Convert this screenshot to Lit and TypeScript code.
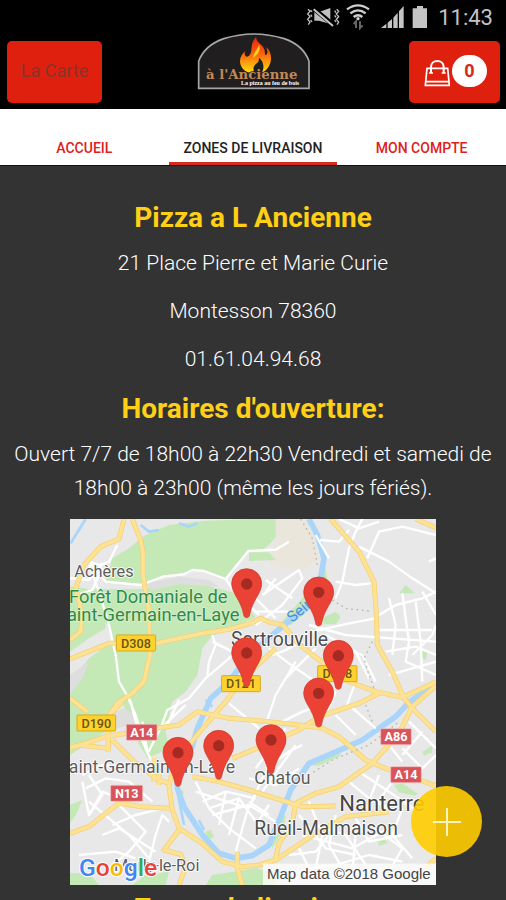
import { LitElement, html, css, svg } from "lit";
import { customElement, state } from "lit/decorators.js";

type Label = { x: number; y: number; text: string; size: string };
type Shield = { x: number; y: number; w: number; text: string; kind: string };

const PINS = [
  [533, 207], [749, 232], [533, 414], [808, 422],
  [749, 535], [606, 675], [449, 692], [327, 713],
];

const SHIELDS: Shield[] = [
  { x: 142, y: 360, w: 118, text: "D308", kind: "d" },
  { x: 458, y: 482, w: 116, text: "D121", kind: "d" },
  { x: 746, y: 452, w: 118, text: "D308", kind: "d" },
  { x: 24, y: 600, w: 116, text: "D190", kind: "d" },
  { x: 172, y: 628, w: 92, text: "A14", kind: "a" },
  { x: 125, y: 811, w: 96, text: "N13", kind: "a" },
  { x: 935, y: 641, w: 92, text: "A86", kind: "a" },
  { x: 965, y: 755, w: 92, text: "A14", kind: "a" },
];

const TOWNS: Label[] = [
  { x: 16, y: 186, text: "Achères", size: "s" },
  { x: 486, y: 392, text: "Sartrouville", size: "l" },
  { x: -32, y: 775, text: "Saint-Germain-en-Laye", size: "m" },
  { x: 556, y: 808, text: "Chatou", size: "m" },
  { x: 811, y: 887, text: "Nanterre", size: "xl" },
  { x: 556, y: 960, text: "Rueil-Malmaison", size: "l" },
  { x: 135, y: 1068, text: "Marly-le-Roi", size: "s" },
];

const PARKS = [
  "M225 62L300 30L400 18L540 12L620 12V66L600 90L580 104L538 108L508 140L470 192L405 166L350 172L290 184L230 212L110 200L130 130L180 100Z",
  "M60 222L225 222L330 196L440 218L500 235L560 306L480 345L430 362L400 400L385 480L350 530L310 560L290 650L300 700L236 730L205 680L160 560L110 650L3 720V500L60 430L130 380L120 330L60 300Z",
  "M3 215L50 220L100 250L110 340L60 370L3 410Z",
  "M540 40L585 15L620 66L580 105H540Z",
  "M540 112L600 112L620 135L540 138Z",
  "M630 330L700 250L745 190L765 140L775 190L740 270L665 330Z",
  "M760 310L800 290L815 305L800 328H765Z",
  "M990 235L1010 210L1038 235Z",
  "M1056 405L1075 410L1070 435L1058 430Z",
  "M725 750L760 725L810 710L815 722L750 752Z",
  "M975 810L1000 805L1045 835L1040 842L990 832Z",
  "M1060 710L1090 692V712L1065 722Z",
  "M925 970L945 968L955 985L930 992Z",
  "M410 950L425 945L435 965L415 978Z",
  "M3 870L40 855L20 900L3 925Z",
  "M190 1110L230 1080L300 1070L290 1110Z",
  "M3 1075H60L90 1110H3Z",
  "M410 1110L430 1080L560 1060L620 1075V1110Z",
  "M330 820L345 830L340 845L330 840Z",
  "M620 915L650 900L645 940L610 1000L600 970Z",
];

const HIGHWAYS = [
  "M190 12L213 70L222 110V180L240 290L243 420L225 500L190 535L145 565L118 605V710",
  "M165 12L150 72L95 95L45 150L20 220L40 300L35 350L3 375",
  "M3 432L120 385L260 385L400 355L480 343L545 325L575 310L602 322L642 330L690 388L770 450L840 500L920 530L1000 547L1060 520L1101 500",
  "M785 12L870 110L915 200L922 300L925 390L970 470L1005 550L1040 590L1101 650",
  "M3 700L110 665L260 640L330 630L385 590L480 610L570 617L690 630L760 640L810 665L890 735L950 760L1101 812",
  "M620 400L560 455L500 520L470 560L380 665L312 755L300 815L310 885L330 940L400 985L460 1040L520 1055L570 1050L620 1035L740 955L830 905L960 890",
  "M620 1030L630 985L670 925L680 865L740 835L810 815L910 745L990 655L1030 575L1101 512",
  "M370 785L450 800L540 825L620 850L700 875L800 873",
  "M3 955L60 935L110 895L150 865L220 875L300 880",
  "M130 675L200 745L270 795L300 805",
  "M330 945L285 1005L335 1018L350 1055L330 1110",
  "M490 730L540 710L690 645L750 605L870 565L940 530",
  "M505 1010L505 1060L520 1110",
  "M3 550L55 590M118 660V700L30 690L3 698",
  "M120 600L160 560M1040 12L1101 38M1070 1060L1101 1030",
  "M255 730V800M270 740V810",
];

const STREETS = [
  "M145 90L120 140L90 150L60 140M60 140L110 200L215 210L285 184L345 178L370 165L405 168L470 192L500 235L570 300",
  "M470 192L538 108L620 104L660 80M60 150L90 230L120 330L140 420L150 500L185 560L205 640L236 715L275 640L295 585L360 550L410 490L480 430L540 370",
  "M430 360L440 390L420 440L415 480M430 380L490 410M3 190L60 195L100 150M20 240L70 225L100 160",
  "M580 240L690 165L700 190L640 270L560 330M590 195L670 250M620 190L590 230M660 290L560 290M560 250L620 310",
  "M880 12L860 50L840 100L820 200L800 250M752 75L810 80L840 45M870 95L960 140L1030 190L1101 235M895 130L930 50L1000 35L1101 60",
  "M800 200L860 210L905 205M930 300L980 270L1060 250L1101 230M720 330L830 360L1101 380M730 350L840 325L920 310",
  "M1000 235L1010 310L1020 380L1010 440L1101 480M960 250L980 330L970 420M1040 260L1055 380L1060 500M930 345H1090M950 410L1040 395L1101 420",
  "M600 400L680 460L770 520M680 440L620 540L590 630M610 420L640 410L700 380M740 400L650 490M820 400L880 420L920 500M770 360L860 410L900 490",
  "M480 565L570 640M800 530L770 600M860 500L830 580M840 570L920 640M800 600L860 660M650 640L560 760M680 690L580 830",
  "M40 800L60 900L100 830L150 850M50 820L110 790L180 800L250 860M60 860L120 910L180 960L240 1030M40 780L100 750L170 760M150 870L230 950L180 1010L120 1060",
  "M130 930L200 900L280 880M240 1040L260 960L280 900L300 920M30 1020L140 1010L200 1030M100 960L150 940L260 1010M60 780L100 840L60 900",
  "M180 555L200 600L236 715L250 740M236 715L220 620M330 555L290 640M275 640L350 570",
  "M380 800L420 880L480 940L560 1000M400 860L470 830L560 850M430 900L540 870L620 920M470 830L450 930M510 850L480 960M540 870L500 1010M380 830L540 880M420 880L510 850L590 960",
  "M540 790L620 810L690 760M640 700L580 790L540 880M600 870L560 930M590 760L660 710L700 690M540 860L600 900",
  "M720 860L760 960L740 1060M690 900L770 1000L860 1020M740 930L830 960L890 1050M800 900L780 990L820 1060M700 960L850 1000L960 940M860 910L900 980L1000 960M920 940L1000 1000L960 1070",
  "M840 800L900 850L960 880M870 770L960 830L1060 900M930 780L900 860M970 800L920 870M1000 700L1060 760L1101 720M960 690L1000 740M1020 620L1101 700M1060 650L1000 720",
  "M690 1000L720 1060L800 1050L900 1020L1000 1040M780 960L740 1010L660 1020M860 950L850 1080M1000 880L970 960L1030 1030M640 620L700 590L760 570",
  "M1060 230L1101 300M1080 140L1101 130M780 130L740 60M810 12L870 40L930 20M960 480L1101 440M1030 420L1090 360L1101 330",
];

@customElement("delivery-map")
export class DeliveryMap extends LitElement {
  static styles = css`
    :host { display: block; }
    .map { display: block; width: 100%; height: auto; font-family: Roboto, sans-serif; }
    .land { fill: #e8e8e8; }
    .field { fill: #ebe6dc; }
    .suburb { fill: #dedede; }
    .park { fill: #c5e8b7; }
    .water { fill: none; stroke: #a9d5fb; stroke-width: 17; stroke-linejoin: round; }
    .thin { stroke-width: 8; }
    .street { fill: none; stroke: #fff; stroke-width: 7; stroke-linejoin: round; }
    .edge { fill: none; stroke: #f3cf72; stroke-width: 15; stroke-linejoin: round; }
    .road { fill: none; stroke: #fde293; stroke-width: 11; stroke-linejoin: round; }
    .border { fill: none; stroke: #b5b5b5; stroke-width: 4; stroke-dasharray: 5 11; }
    .town { fill: #5c5c5c; stroke: #fff; stroke-width: 5; paint-order: stroke; }
    .s { font-size: 49px; }
    .m { font-size: 53px; }
    .l { font-size: 58px; fill: #4d4d4d; }
    .xl { font-size: 66px; fill: #444; }
    .forest { font-size: 55px; fill: #2e8b43; stroke: #dff2d8; stroke-width: 4; paint-order: stroke; }
    .river { font-size: 46px; fill: #4a90d9; }
    .plate-d { fill: #fdd22f; stroke: #d9a91c; stroke-width: 3; }
    .plate-a { fill: #d9535a; stroke: #f3c3c5; stroke-width: 2; }
    .code-d { font-size: 38px; font-weight: 500; fill: #6b5310; text-anchor: middle; }
    .code-a { font-size: 38px; font-weight: 700; fill: #fff; text-anchor: middle; }
    .pin { fill: #ea4335; stroke: #c5362b; stroke-width: 2; }
    .hole { fill: #a52a22; }
    .credit-bg { fill: #fff; fill-opacity: 0.75; }
    .credit { font-family: "Liberation Sans", Arial, sans-serif; font-size: 45px; fill: #444; }
    .google { font-size: 74px; font-weight: 500; stroke: #fff; stroke-width: 6; paint-order: stroke; }
    .blue { fill: #4285f4; }
    .red { fill: #ea4335; }
    .yellow { fill: #fbbc05; }
    .green { fill: #34a853; }
  `;

  render() {
    return html`
      <svg class="map" viewBox="3 12 1098 1098" role="img" aria-label="Zones de livraison">
        <rect class="land" x="3" y="12" width="1098" height="1098"></rect>
        <path class="field" d="M600 12H720L750 130L700 170L600 150L620 66Z"></path>
        ${PARKS.map((d) => svg`<path class="park" d=${d}></path>`)}
        <path class="suburb" d="M225 205L330 185L420 195L450 215L330 208L250 225ZM3 480L60 440L40 490L3 540ZM130 600L160 580L205 600L190 630L140 640Z"></path>
        <path class="water" d="M720 12L745 60L765 130L753 200L735 260L660 318L600 368L540 420L480 500L425 550L385 640L362 720L325 790V820L345 875L400 960L450 1015L500 1030L550 1022L600 990L635 905L665 825L720 745L790 715L880 675L980 605L1020 562L1101 505"></path>
        <path class="water thin" d="M50 12L5 85M215 30L240 50L270 45M330 25L360 35L385 25M410 555L430 575M325 830L345 930M390 915L405 945"></path>
        ${STREETS.map((d) => svg`<path class="street" d=${d}></path>`)}
        ${HIGHWAYS.map((d) => svg`<path class="edge" d=${d}></path>`)}
        ${HIGHWAYS.map((d) => svg`<path class="road" d=${d}></path>`)}
        <path class="border" d="M695 12L730 70L745 150M790 255L830 280L900 288M910 380L885 430L900 480L915 520M890 570L910 620M720 780L790 735L900 690L990 620"></path>
        <text class="river" x="670" y="324" transform="rotate(-40 670 324)">Seine</text>
        ${TOWNS.map((t) => svg`<text class="town ${t.size}" x=${t.x} y=${t.y}>${t.text}</text>`)}
        <text class="forest" x="0" y="264">Forêt Domaniale de</text>
        <text class="forest" x="-39" y="319">Saint-Germain-en-Laye</text>
        ${SHIELDS.map((s) => svg`
          <rect class="plate-${s.kind}" x=${s.x} y=${s.y} width=${s.w} height="48" rx="3"></rect>
          <text class="code-${s.kind}" x=${s.x + s.w / 2} y=${s.y + 38}>${s.text}</text>`)}
        ${PINS.map(([x, y]) => svg`
          <g transform="translate(${x} ${y})">
            <path class="pin" d="M0 -46A45 45 0 0 1 45 -1C45 28 17 48 9 92C8 104 -8 104 -9 92C-17 48 -45 28 -45 -1A45 45 0 0 1 0 -46Z"></path>
            <circle class="hole" r="17"></circle>
          </g>`)}
        <rect class="credit-bg" x="582" y="1046" width="519" height="64"></rect>
        <text class="credit" x="594" y="1092">Map data ©2018 Google</text>
        <text class="google" x="30" y="1082"><tspan class="blue">G</tspan><tspan class="red">o</tspan><tspan class="yellow">o</tspan><tspan class="blue">g</tspan><tspan class="green">l</tspan><tspan class="red">e</tspan></text>
      </svg>
    `;
  }
}

@customElement("app-root")
export class AppRoot extends LitElement {
  @state() private active = 1;

  private tabs = ["Accueil", "Zones de livraison", "Mon compte"];

  static styles = css`
    :host {
      display: flex;
      flex-direction: column;
      position: relative;
      height: 100vh;
      overflow: hidden;
      background: #333;
      font-family: Roboto, "Noto Sans", sans-serif;
    }
    button { font-family: inherit; border: 0; margin: 0; cursor: pointer; }
    .status {
      display: flex;
      justify-content: flex-end;
      align-items: center;
      gap: 8px;
      height: 36px;
      padding-right: 13px;
      background: #000;
      color: #c4c4c4;
    }
    .status-icons { width: 126px; height: 36px; }
    .clock { font-size: 22px; line-height: 36px; }
    .bar {
      display: grid;
      grid-template-columns: 1fr auto 1fr;
      align-items: start;
      height: 68px;
      padding: 5px 6px 0 7px;
      background: #000;
    }
    .action {
      display: flex;
      align-items: center;
      justify-content: center;
      height: 62px;
      border-radius: 5px;
      background: #e0200f;
    }
    .menu { width: 95px; padding: 0 0 3px; font-size: 18px; color: #85352a; }
    .cart { width: 91px; padding: 0 0 3px 2px; gap: 2px; justify-self: end; }
    .bag { width: 26px; height: 28px; margin-top: 4px; }
    .count {
      width: 35px;
      border-radius: 16px;
      background: #fff;
      color: #d3281c;
      font-size: 18px;
      font-weight: 700;
      line-height: 32px;
    }
    .logo { width: 114px; height: 57px; margin-top: -8px; }
    .tabs {
      display: grid;
      grid-template-columns: repeat(3, 1fr);
      height: 56px;
      background: #fff;
      flex: none;
    }
    .tab {
      padding: 27px 0 2px;
      border-bottom: 3px solid transparent;
      background: none;
      color: #e0201b;
      font-size: 14px;
      font-weight: 500;
      text-transform: uppercase;
      white-space: nowrap;
    }
    .tab.on { color: #222; border-bottom-color: #d9291c; }
    .page {
      flex: 1;
      min-height: 0;
      overflow-y: auto;
      scrollbar-width: none;
      border-top: 1px solid #111;
      padding: 33px 8px;
      text-align: center;
      color: #fff;
    }
    .title { margin: 0 0 10px; font-size: 28px; font-weight: 700; line-height: 37px; color: #ffd016; }
    .line { margin: 0 0 14px; font-size: 21px; font-weight: 300; line-height: 34px; }
    .zones { max-width: 366px; margin: 0 auto 5px; }
    .add {
      position: absolute;
      right: 24px;
      bottom: 43px;
      display: flex;
      align-items: center;
      justify-content: center;
      width: 71px;
      height: 71px;
      padding: 0;
      border-radius: 50%;
      background: rgba(255, 204, 0, 0.9);
    }
    .plus { width: 30px; height: 30px; }
    .brand { font-family: "DejaVu Serif", serif; font-size: 40px; font-weight: 700; fill: #c08a58; stroke: #211e20; stroke-width: 5; paint-order: stroke; }
    .motto { font-family: "Liberation Serif", serif; font-size: 18px; font-weight: 700; fill: #fff; }
  `;

  private statusIcons() {
    return html`
      <svg class="status-icons" viewBox="45 0 378 108" aria-hidden="true">
        <g fill="none" stroke="#c0c0c0" stroke-width="4">
          <path d="M57 28L63 34L56 42L63 50L56 58L63 66L58 74M65 30L69 36M65 44L69 50M65 60L69 66"></path>
          <path d="M143 28L149 34L142 42L149 50L142 58L149 66L144 74M137 32L141 38M137 46L141 52M137 60L141 66"></path>
        </g>
        <path d="M76 36H90L124 24V72L90 62H76Z" fill="#c0c0c0"></path>
        <path d="M72 24L134 76" stroke="#000" stroke-width="14"></path>
        <path d="M74 28L132 78" stroke="#c8c8c8" stroke-width="6"></path>
        <g fill="none" stroke="#cfcfcf" stroke-width="7">
          <path d="M174 28Q207 4 240 28M184 40Q207 22 230 40M194 51Q207 40 220 51"></path>
        </g>
        <circle cx="207" cy="56" r="5" fill="#cfcfcf"></circle>
        <path d="M201 84V64L194 72M213 64V84L221 76" fill="none" stroke="#666" stroke-width="6"></path>
        <path d="M276 84L292 71V84ZM296 68L309 57V84H296ZM313 53L326 38V84H313ZM330 34L344 18V84H330Z" fill="#c4c4c4"></path>
        <path d="M384 18H402V25H414V84H371V25H384Z" fill="#c4c4c4"></path>
      </svg>
    `;
  }

  private logo() {
    return html`
      <svg class="logo" viewBox="20 25 342 172" role="img" aria-label="à l'Ancienne">
        <defs>
          <linearGradient id="flame" x1="0" y1="0" x2="0" y2="1">
            <stop offset="0" stop-color="#e8200c"></stop>
            <stop offset="0.45" stop-color="#f8600c"></stop>
            <stop offset="1" stop-color="#ffe20c"></stop>
          </linearGradient>
        </defs>
        <path d="M24 192V110Q42 62 100 42Q190 14 282 42Q340 62 357 110V192Z" fill="#211e20" stroke="#a8a8a8" stroke-width="5"></path>
        <path d="M160 136C140 114 150 92 164 80C160 94 168 100 176 94C190 80 176 58 198 36C196 52 212 56 220 70C226 80 222 88 226 92C236 86 230 76 228 68C246 82 248 114 230 134C222 144 214 146 214 146C226 124 216 108 206 100C206 120 196 114 190 128C188 136 192 146 192 146C180 146 168 144 160 136Z" fill="url(#flame)"></path>
        <path d="M206 60C204 74 190 82 188 100C200 92 214 78 206 60Z" fill="#ffd020"></path>
        <text class="brand" x="46" y="165">à l'Ancienne</text>
        <text class="motto" x="152" y="183">La pizza au feu de bois</text>
      </svg>
    `;
  }

  render() {
    return html`
      <div class="status">${this.statusIcons()}<span class="clock">11:43</span></div>
      <header class="bar">
        <button class="action menu" type="button">La Carte</button>
        ${this.logo()}
        <button class="action cart" type="button" aria-label="Panier">
          <svg class="bag" viewBox="404 172 78 84" aria-hidden="true">
            <g fill="none" stroke="#fff" stroke-width="5">
              <path d="M413 200H475L480 251H408ZM410 240H478"></path>
              <path d="M425 214V196C425 172 463 172 463 196V214" stroke-width="6"></path>
              <path d="M419 214H431M457 214H469"></path>
            </g>
          </svg>
          <span class="count">0</span>
        </button>
      </header>
      <nav class="tabs">
        ${this.tabs.map((name, i) => html`
          <button class="tab ${i === this.active ? "on" : ""}" type="button" @click=${() => (this.active = i)}>${name}</button>`)}
      </nav>
      <main class="page">
        <h2 class="title">Pizza a L Ancienne</h2>
        <p class="line">21 Place Pierre et Marie Curie</p>
        <p class="line">Montesson 78360</p>
        <p class="line">01.61.04.94.68</p>
        <h2 class="title">Horaires d'ouverture:</h2>
        <p class="line">Ouvert 7/7 de 18h00 à 22h30 Vendredi et samedi de 18h00 à 23h00 (même les jours fériés).</p>
        <delivery-map class="zones"></delivery-map>
        <h2 class="title">Zones de livraison:</h2>
      </main>
      <button class="add" type="button" aria-label="Ajouter">
        <svg class="plus" viewBox="0 0 30 30" aria-hidden="true">
          <path d="M15 1V29M1 15H29" stroke="#fff3c0" stroke-width="2"></path>
        </svg>
      </button>
    `;
  }
}
